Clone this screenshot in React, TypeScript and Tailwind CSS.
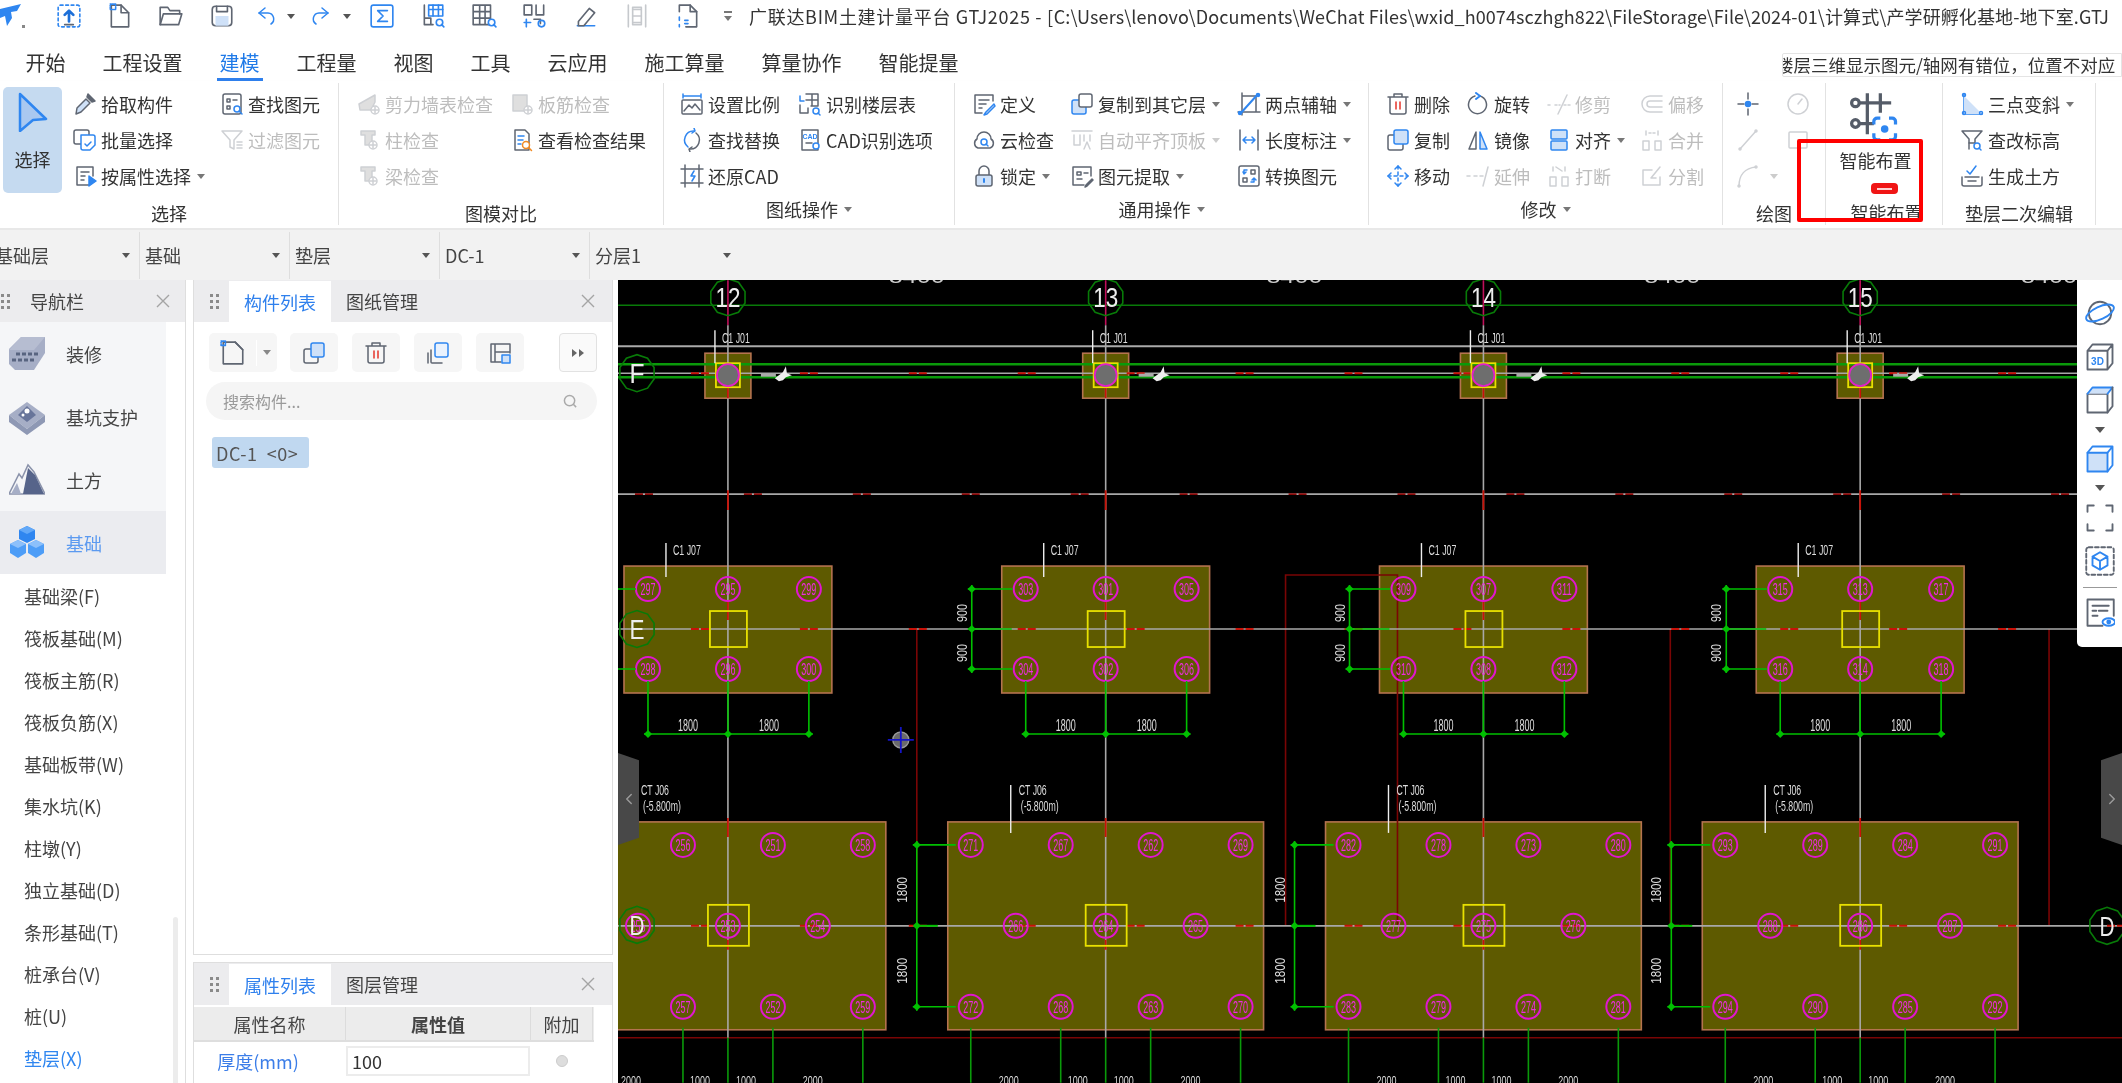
import { ReactNode } from 'react'
import { ChevronLeft, ChevronRight } from 'lucide-react'

const G = '#5f6672'
const B = '#2f86f0'
const L = '#cfe1f8'

const S = ({ children, c = 'w-[24px] h-[24px]' }: { children: ReactNode; c?: string }) => (
  <svg viewBox="0 0 24 24" className={c} fill="none" stroke={G} strokeWidth={1.5} strokeLinecap="round" strokeLinejoin="round">
    {children}
  </svg>
)

const icons: Record<string, ReactNode> = {
  pick: <S><path d="M15 2l7 7-3 1-5-5z" fill={G} /><path d="M13 7l4 4-9 9-5 2 1-6z" fill={L} /></S>,
  batch: <S><rect x="1" y="2" width="15" height="14" rx="2" /><path stroke={B} fill="#fff" d="M8 7h12a2 2 0 0 1 2 2v8l-5 5H10a2 2 0 0 1-2-2z" /><path stroke={B} d="M12 16l2 2 4-4" /></S>,
  attr: <S><path d="M20 12V3H4v18h12" /><path d="M8 8h8M8 12h4M8 16h3" /><path d="M16 12l7 5-7 5z" fill={B} stroke={B} /></S>,
  find: <S><rect x="3" y="2" width="18" height="20" rx="2" /><path d="M7 7h3v3H7zM13 8h4M7 14h3v3H7z" /><circle cx="17" cy="17" r="3" stroke={B} fill="#fff" /><path stroke={B} d="M19 19l3 3" /></S>,
  filter: <S><path d="M2 3h20l-8 9v9l-4-2v-7z" /><path d="M17 14h5M17 17h5M17 20h5" /></S>,
  wall: <S><path d="M2 12l16-9v7l-4 8H3z" fill="#999" /><circle cx="18" cy="18" r="4" fill="#fff" /><path d="M18 15v6M15 18h6" /></S>,
  rebar: <S><rect x="3" y="3" width="14" height="16" fill="#999" /><circle cx="18" cy="18" r="4" fill="#fff" /><path d="M18 15v6M15 18h6" /></S>,
  colChk: <S><path d="M4 3h14v4h-3v10H8V7H4z" fill="#999" /><circle cx="16" cy="17" r="4" fill="#fff" /><path d="M16 14v6M13 17h6" /></S>,
  result: <S><path d="M5 2h10l4 4v16H5z" /><path d="M8 8h6M8 12h5M8 16h3" stroke={B} /><circle cx="16" cy="17" r="3.5" stroke="#f08a24" fill="#fff" /><path stroke="#f08a24" d="M18.5 19.5l3 3" /></S>,
  scale: <S><path stroke={B} d="M3 2v4M21 2v4M3 4h18" /><rect x="2" y="8" width="20" height="14" rx="1" /><path d="M4 19l5-6 3 3 3-4 5 6" /></S>,
  floor: <S><path d="M8 2h12v12h-7M14 2v12M8 8h12" /><path stroke={B} d="M2 4v5h4" /><path d="M2 13v8h8v-5" /><circle cx="18" cy="19" r="3" stroke={B} /><path stroke={B} d="M20 21l2 2" /></S>,
  replace: <S><path d="M14 3a9 9 0 0 0-6 16" stroke={B} /><path d="M10 21a9 9 0 0 0 6-16" /><path stroke={B} d="M14 0l1 3-3 2" /><path d="M10 24l-1-3 3-2" /></S>,
  cad: <S><path d="M4 2h16v20H4z" /><text x="12" y="11" textAnchor="middle" fontSize="7" fontWeight="700" fill={B} stroke="none" fontFamily="Liberation Sans">CAD</text><path d="M8 15h6" /><circle cx="18" cy="18" r="3" stroke={B} fill="#fff" /></S>,
  restore: <S><path d="M5 1v22M19 1v22M1 5h22M1 19h22" /><path d="M14 7l-3 5h4l-3 5" stroke={B} /></S>,
  def: <S><path d="M21 9V3H3v18h7" /><path d="M7 8h10M7 12h7M7 16h3" /><path stroke={B} d="M22 12l-8 8-2 3 3-1 8-8z" fill={L} /></S>,
  cloud: <S><path d="M6 20a5 5 0 0 1-1-9 7 7 0 0 1 14 0 5 5 0 0 1-1 9z" /><circle cx="12" cy="14" r="3" stroke={B} /><path d="M14 16l2 2" stroke={B} /></S>,
  lock: <S><path d="M7 11V7a5 5 0 0 1 10 0v4" /><rect x="4" y="11" width="16" height="11" rx="2" fill={L} /><path stroke={B} d="M12 15v3" strokeWidth="2" /></S>,
  copyTo: <S><rect x="2" y="8" width="14" height="14" rx="2" stroke={B} fill={L} /><rect x="9" y="2" width="13" height="13" rx="2" fill="#fff" /></S>,
  autoAlign: <S><path d="M2 3h20M4 7v10h6V7M14 7v6M20 7v6M14 21l3-7 3 7" /></S>,
  extract: <S><path d="M21 12V3H3v18h11" /><path d="M7 8h4v3H7zM14 9h4M7 15h5" /><path d="M22 15l-6 6-1 2 2-1 6-6z" fill="#999" /></S>,
  twoPts: <S><path d="M5 1v22M1 20h22M5 4h14v16" /><path stroke={B} strokeWidth="2" d="M3 22L21 2" /><circle cx="3" cy="21" r="1.5" fill={B} stroke={B} /><circle cx="21" cy="3" r="1.5" fill={B} stroke={B} /></S>,
  length: <S><path d="M3 2v20M21 2v20" /><path stroke={B} d="M6 12h12M6 12l3-3M6 12l3 3M18 12l-3-3M18 12l-3 3" /></S>,
  convert: <S><rect x="2" y="2" width="20" height="20" rx="2" /><path d="M14 6h4v4h-4zM6 14h4v4H6z" /><path stroke={B} d="M10 6H7v4M6 8l1 2 2-2M14 18h3v-4M15 16l2-2 2 2" /></S>,
  del: <S><path d="M2 5h20M8 5V2h8v3M4 5v15a2 2 0 0 0 2 2h12a2 2 0 0 0 2-2V5" /><path stroke="#e5352b" d="M10 10v7M14 10v7" /></S>,
  copy: <S><rect x="2" y="7" width="15" height="15" rx="2" /><rect x="8" y="2" width="14" height="14" rx="2" stroke={B} fill={L} /></S>,
  move: <S><g stroke={B}><path d="M12 2v20M2 12h20" strokeDasharray="3 3" /><path d="M9 5l3-3 3 3M9 19l3 3 3-3M5 9l-3 3 3 3M19 9l3 3-3 3" /></g></S>,
  rot: <S><path d="M14 4a9 9 0 1 1-5 0" /><path stroke={B} d="M10 1l4 3-4 3" strokeWidth="2" /></S>,
  mirror: <S><path d="M10 4L3 21h7z" /><path stroke={B} d="M14 4l7 17h-7z" fill={L} /></S>,
  trim: <S><path d="M1 13h4M8 13h5M17 13h6" strokeDasharray="2 2" /><path d="M20 3L11 22" /></S>,
  extend: <S><path d="M1 12h4M8 12h3M14 12h3" strokeDasharray="3 2" /><path d="M22 3l-5 19" /></S>,
  align: <S><rect x="4" y="2" width="16" height="9" rx="1" stroke={B} fill={L} /><rect x="4" y="13" width="16" height="9" rx="1" stroke={B} fill={L} /></S>,
  merge: <S><path d="M3 13h6v9H3zM15 13h6v9h-6zM6 3v4M18 3v4" /><path d="M9 5h6" strokeDasharray="2 2" /></S>,
  breakI: <S><path d="M3 13h6v9H3zM15 13h6v9h-6zM6 3v4M18 3v4" /><path d="M9 3l6 4" /></S>,
  offset: <S><path d="M22 4H10a8 8 0 0 0 0 16h12" /><path d="M22 9H10a3 3 0 0 0 0 6h12" /></S>,
  split: <S><path d="M20 13v8H3V6h9" /><path d="M20 3l-9 11M11 14l5 0" /></S>,
  point: <S><path d="M12 1v6M12 17v6M2 12h6M16 12h6" /><circle cx="12" cy="12" r="2.5" fill={B} stroke={B} /></S>,
  clock: <S><circle cx="12" cy="12" r="10" /><path d="M12 12l4-5" /></S>,
  line: <S><path d="M4 21L20 3" /><circle cx="4" cy="21" r="1" /><circle cx="20" cy="3" r="1" /></S>,
  rect: <S><rect x="3" y="4" width="18" height="16" rx="1" /></S>,
  arc: <S><path d="M3 22C3 11 9 4 20 3" /><circle cx="3" cy="22" r="1" /><circle cx="20" cy="3" r="1" /></S>,
  tri: <S><path d="M4 2v20h18" stroke={B} /><path d="M4 4l18 18H4z" fill={L} stroke="none" /><circle cx="4" cy="3" r="1.5" stroke={B} /><circle cx="4" cy="21" r="1.5" stroke={B} /><circle cx="21" cy="21" r="1.5" stroke={B} /></S>,
  elev: <S><path d="M2 3h20l-7 8v4h-6v-4z" /><path d="M9 15v6" /><circle cx="17" cy="18" r="3" stroke={B} /><path stroke={B} d="M19 20l2 2" /></S>,
  soil: <S><path d="M2 13v7a2 2 0 0 0 2 2h16a2 2 0 0 0 2-2v-7M5 13h14M8 17h8" /><path stroke={B} d="M7 7l3 3 6-8" /></S>,
}

type Item = { t?: string; i?: string; off?: boolean; caret?: boolean } | null
type Col = { w: string; items: Item[] }
type Group = { w: string; pl: string; label: string; caret?: boolean; cols: Col[] }

const Caret = ({ off }: { off?: boolean }) => (
  <span className={`ml-[6px] h-0 w-0 border-x-[4px] border-t-[5px] border-x-transparent ${off ? 'border-t-[#ccc]' : 'border-t-[#777]'}`} />
)

const RibbonItem = ({ item }: { item: Item }) => {
  if (!item) return <div className="h-[36px]" />
  return (
    <div className="flex h-[36px] items-center whitespace-nowrap">
      <span className={`mr-[4px] ${item.off ? 'opacity-30' : ''}`}>{item.i && icons[item.i]}</span>
      {item.t && <span className={item.off ? 'text-[#bdbdbd]' : 'text-[#333]'}>{item.t}</span>}
      {item.caret && <Caret off={item.off} />}
    </div>
  )
}

const rightGroups: Group[] = [
  {
    w: 'w-[325px]', pl: 'pl-[18px]', label: '图模对比',
    cols: [
      { w: 'w-[153px]', items: [{ t: '剪力墙表检查', i: 'wall', off: true }, { t: '柱检查', i: 'colChk', off: true }, { t: '梁检查', i: 'colChk', off: true }] },
      { w: 'w-[150px]', items: [{ t: '板筋检查', i: 'rebar', off: true }, { t: '查看检查结果', i: 'result' }] },
    ],
  },
  {
    w: 'w-[291px]', pl: 'pl-[16px]', label: '图纸操作', caret: true,
    cols: [
      { w: 'w-[118px]', items: [{ t: '设置比例', i: 'scale' }, { t: '查找替换', i: 'replace' }, { t: '还原CAD', i: 'restore' }] },
      { w: 'w-[150px]', items: [{ t: '识别楼层表', i: 'floor' }, { t: 'CAD识别选项', i: 'cad' }] },
    ],
  },
  {
    w: 'w-[414px]', pl: 'pl-[17px]', label: '通用操作', caret: true,
    cols: [
      { w: 'w-[98px]', items: [{ t: '定义', i: 'def' }, { t: '云检查', i: 'cloud' }, { t: '锁定', i: 'lock', caret: true }] },
      { w: 'w-[167px]', items: [{ t: '复制到其它层', i: 'copyTo', caret: true }, { t: '自动平齐顶板', i: 'autoAlign', off: true, caret: true }, { t: '图元提取', i: 'extract', caret: true }] },
      { w: 'w-[125px]', items: [{ t: '两点辅轴', i: 'twoPts', caret: true }, { t: '长度标注', i: 'length', caret: true }, { t: '转换图元', i: 'convert' }] },
    ],
  },
  {
    w: 'w-[354px]', pl: 'pl-[17px]', label: '修改', caret: true,
    cols: [
      { w: 'w-[80px]', items: [{ t: '删除', i: 'del' }, { t: '复制', i: 'copy' }, { t: '移动', i: 'move' }] },
      { w: 'w-[81px]', items: [{ t: '旋转', i: 'rot' }, { t: '镜像', i: 'mirror' }, { t: '延伸', i: 'extend', off: true }] },
      { w: 'w-[93px]', items: [{ t: '修剪', i: 'trim', off: true }, { t: '对齐', i: 'align', caret: true }, { t: '打断', i: 'breakI', off: true }] },
      { w: 'w-[70px]', items: [{ t: '偏移', i: 'offset', off: true }, { t: '合并', i: 'merge', off: true }, { t: '分割', i: 'split', off: true }] },
    ],
  },
  {
    w: 'w-[103px]', pl: 'pl-[13px]', label: '绘图',
    cols: [
      { w: 'w-[50px]', items: [{ i: 'point' }, { i: 'line', off: true }, { i: 'arc', off: true, caret: true }] },
      { w: 'w-[35px]', items: [{ i: 'clock', off: true }, { i: 'rect', off: true }] },
    ],
  },
]

const GroupBox = ({ g }: { g: Group }) => (
  <div className={`flex h-[142px] flex-col border-r border-[#e2e2e2] ${g.w}`}>
    <div className={`flex h-[112px] pt-[3px] ${g.pl}`}>
      {g.cols.map((c, idx) => (
        <div key={idx} className={c.w}>
          {c.items.map((it, k) => <RibbonItem key={k} item={it} />)}
        </div>
      ))}
    </div>
    <div className={`flex flex-1 items-center justify-center text-[#333] ${g.caret ? 'pb-[2px]' : 'pt-[6px]'}`}>
      {g.label}
      {g.caret && <Caret />}
    </div>
  </div>
)

const Ribbon = () => (
  <div className="flex h-[149px] pt-[2px] text-[18px] leading-none border-b-2 border-[#e8e8e8] shadow-[0_1px_2px_rgba(0,0,0,0.08)]">
    <div className="flex h-[142px] w-[339px] flex-col border-r border-[#e2e2e2]">
      <div className="flex h-[112px] pt-[3px]">
        <div className="ml-[3px] mt-[1px] flex h-[106px] w-[59px] flex-col items-center rounded-[5px] bg-[#c5daf0] pt-[5px] text-[#333]">
          <svg viewBox="0 0 30 40" className="h-[40px] w-[30px]" fill="#a9c8f0" stroke={B} strokeWidth="2.5" strokeLinejoin="round">
            <path d="M2 2l26 25-13 1-13 11z" />
          </svg>
          <span className="mt-[18px]">选择</span>
        </div>
        <div className="ml-[11px] w-[147px]">
          <RibbonItem item={{ t: '拾取构件', i: 'pick' }} />
          <RibbonItem item={{ t: '批量选择', i: 'batch' }} />
          <RibbonItem item={{ t: '按属性选择', i: 'attr', caret: true }} />
        </div>
        <div>
          <RibbonItem item={{ t: '查找图元', i: 'find' }} />
          <RibbonItem item={{ t: '过滤图元', i: 'filter', off: true }} />
        </div>
      </div>
      <div className="flex flex-1 items-center justify-center pt-[6px] text-[#333]">选择</div>
    </div>
    {rightGroups.map((g) => <GroupBox key={g.label} g={g} />)}
    <div className="flex h-[142px] w-[117px] flex-col border-r border-[#e2e2e2] text-[#333]">
      <div className="flex h-[112px] flex-col items-center pt-[8px]">
        <svg viewBox="0 0 48 48" className="ml-[-17px] h-[52px] w-[52px]" fill="none" stroke="#555c68" strokeWidth="3">
          <path d="M4 11h34M4 30h18M16 2v38M28 2v18" />
          <circle cx="5" cy="11" r="3.5" fill="#fff" />
          <circle cx="5" cy="30" r="3.5" fill="#fff" />
          <path stroke={B} d="M28 25h-3a3 3 0 0 0-3 3v3M36 25h3a3 3 0 0 1 3 3v3M28 45h-3a3 3 0 0 1-3-3v-3M36 45h3a3 3 0 0 0 3-3v-3" />
          <circle cx="32" cy="35" r="2" fill={B} stroke={B} />
        </svg>
        <span className="ml-[-17px] mt-[8px]">智能布置</span>
      </div>
      <div className="flex flex-1 items-center justify-center pl-[5px] pt-[3px]">智能布置</div>
    </div>
    <div className="flex h-[142px] w-[153px] flex-col border-r border-[#e2e2e2]">
      <div className="h-[112px] pl-[17px] pt-[3px]">
        <RibbonItem item={{ t: '三点变斜', i: 'tri', caret: true }} />
        <RibbonItem item={{ t: '查改标高', i: 'elev' }} />
        <RibbonItem item={{ t: '生成土方', i: 'soil' }} />
      </div>
      <div className="flex flex-1 items-center justify-center pt-[6px] text-[#333]">垫层二次编辑</div>
    </div>
  </div>
)

const TI = ({ children }: { children: ReactNode }) => (
  <div className="flex w-[51px] justify-center"><S c="h-[26px] w-[26px]">{children}</S></div>
)

const Tri = () => <span className="h-0 w-0 border-x-[4px] border-t-[5px] border-x-transparent border-t-[#555]" />

const TitleBar = () => (
  <div className="flex h-[32px] items-center overflow-hidden whitespace-nowrap text-[18px] text-[#333] *:shrink-0">
    <div className="flex w-[43px] items-center">
      <svg viewBox="0 0 26 28" className="h-[28px] w-[26px]" fill={B}>
        <path d="M0 7l21-5-4 7-6 1 1 6-5 8-2-10-5 2z" />
        <path d="M22 23h3v3h-3z" fill="#888" />
      </svg>
    </div>
    <TI><rect x="2" y="2" width="20" height="20" stroke={B} strokeDasharray="2.5 2.5" rx="2" /><path stroke="#1d6fd8" strokeWidth="2.5" d="M12 17V8M8 11l4-4 4 4" /><path d="M8 20h8" /></TI>
    <TI><path d="M13 2H4v20h16V9z" /><path d="M13 2v7h7" /><rect x="3" y="1" width="5" height="5" stroke={B} strokeDasharray="1 1" /></TI>
    <TI><path d="M2 20V4h7l2 3h9v3" /><path d="M2 20l3-10h17l-3 10z" /></TI>
    <TI><rect x="3" y="3" width="18" height="18" rx="3" /><path d="M7 3v5h10V3" /><rect x="6" y="12" width="12" height="9" fill={L} stroke="none" /></TI>
    <div className="flex w-[40px] justify-center"><S><path stroke={B} d="M10 4L4 9l6 5" /><path stroke={B} d="M4 9h9a6 6 0 0 1 3 11" /></S></div>
    <Tri />
    <div className="ml-[2px] flex w-[46px] justify-center"><S><path stroke={B} d="M14 4l6 5-6 5" /><path stroke={B} d="M20 9h-9a6 6 0 0 0-3 11" /></S></div>
    <Tri />
    <div className="ml-[6px] flex w-[50px] justify-center"><S c="h-[26px] w-[26px]"><rect x="2" y="2" width="20" height="20" rx="2" stroke={B} /><path stroke={B} d="M17 7H8l5 5-5 5h9" /></S></div>
    <TI><path d="M4 2v18h8M4 20v-6h6v6" /><rect x="8" y="2" width="13" height="10" stroke={B} /><path stroke={B} d="M8 6h13M12 2v10M17 2v10" /><circle cx="18" cy="18" r="3" stroke={B} /><path stroke={B} d="M20 20l2 2" /></TI>
    <TI><path d="M2 2h16v18H2zM8 2v18M13 2v18M2 8h16M2 14h16" /><circle cx="19" cy="18" r="3" stroke={B} fill="#fff" /><path stroke={B} d="M21 20l2 2" /></TI>
    <TI><path d="M2 2v9h7V2zM13 2v9h7V2" /><path stroke={B} d="M4 15v7M2 18h6" /><path d="M11 15h6v4" /><circle cx="18" cy="19" r="3" stroke={B} /></TI>
    <TI><path d="M4 21h16" stroke={B} /><path d="M5 17l10-12 5 4-10 12H5z" /></TI>
    <TI><g opacity=".35"><path d="M4 2v20M20 2v20M8 6h8M8 12h8M8 18h8" /><rect x="8" y="4" width="8" height="16" /></g></TI>
    <TI><path d="M4 8V2h10l6 6v14H10" /><path d="M14 2v6h6" /><path d="M4 13v3M4 20v2M9 16h3M9 19h3" stroke={B} /></TI>
    <div className="flex w-[30px] flex-col items-center gap-[3px]">
      <span className="h-[2px] w-[8px] bg-[#777]" />
      <span className="h-0 w-0 border-x-[4px] border-t-[5px] border-x-transparent border-t-[#777]" />
    </div>
    <span className="ml-[6px] text-[18px]">
      <span className="tracking-[0.7px]">广联达BIM土建计量平台 GTJ2025 - [</span>
      <span className="tracking-[0.1px]">C:\Users\lenovo\Documents\WeChat Files\wxid_h0074sczhgh822\FileStorage\File\2024-01\计算式\产学研孵化基地-地下室.GTJ</span>
    </span>
  </div>
)

const tabs = ['开始', '工程设置', '建模', '工程量', '视图', '工具', '云应用', '施工算量', '算量协作', '智能提量']

const TabBar = () => (
  <div className="flex h-[49px] items-end overflow-hidden pl-[7px] text-[20px] leading-none text-[#333]">
    {tabs.map((t) => (
      <div key={t} className="flex h-[36px] items-center px-[18.5px]">
        {t === '建模' ? (
          <span className="mx-[-3px] flex h-[36px] items-center border-b-[3px] border-[#2f80ed] px-[3px] pt-[3px] text-[#1f7ae8]">{t}</span>
        ) : t}
      </div>
    ))}
    <div className="mb-[4px] ml-auto h-[24px] w-[340px] overflow-hidden whitespace-nowrap rounded-l-[2px] border border-[#e4e4e4] bg-white text-[17.5px] leading-[22px]">
      <span className="ml-[-7px]">楼层三维显示图元/轴网有错位，位置不对应</span>
    </div>
  </div>
)

const Selectors = () => (
  <div className="flex h-[50px] shrink-0 items-center overflow-hidden bg-[#f2f2f2] text-[18px] text-[#444]">
    {['基础层', '基础', '垫层', 'DC-1', '分层1'].map((t, i) => (
      <div key={t} className={`flex h-[47px] shrink-0 items-center justify-between pl-[5px] pr-[9px] ${i === 0 ? 'ml-[-10px]' : ''} ${i === 4 ? 'w-[150px]' : 'w-[150px] border-r border-[#dedede]'}`}>
        <span>{t}</span>
        <span className="h-0 w-0 border-x-[4px] border-t-[5px] border-x-transparent border-t-[#555]" />
      </div>
    ))}
  </div>
)

const Grip = () => (
  <div className="grid grid-cols-2 gap-x-[3px] gap-y-[3px]">
    {[0, 1, 2, 3, 4, 5].map((i) => <span key={i} className="h-[3px] w-[3px] bg-[#8a8a8a]" />)}
  </div>
)

const CloseX = () => (
  <svg viewBox="0 0 14 14" className="h-[14px] w-[14px]" stroke="#a4a4a4" strokeWidth="1.4"><path d="M1 1l12 12M13 1L1 13" /></svg>
)

const navIcons: Record<string, ReactNode> = {
  装修: (
    <svg viewBox="0 0 36 36" className="h-[36px] w-[36px]">
      <path d="M0 28V13L12 1h24v16L25 34H6z" fill="#a6aec6" />
      <path d="M12 1h24L25 14H0z" fill="#c1c7d8" opacity=".6" />
      <path d="M3 24h4M9 24h4M15 24h4M21 24h4M7 18h4M13 18h4M19 18h4M25 18h4" stroke="#586480" strokeWidth="3" />
    </svg>
  ),
  基坑支护: (
    <svg viewBox="0 0 36 36" className="h-[36px] w-[36px]">
      <path d="M18 3l18 13-18 14L0 16z" fill="#a6aec6" />
      <path d="M0 16v7l18 13 18-13v-7L18 30z" fill="#8e98b4" />
      <path d="M18 7l9 9-9 7-9-7z" fill="#68759a" />
      <circle cx="18" cy="12" r="2.5" fill="#fff" />
      <circle cx="14" cy="16" r="1.5" fill="#fff" />
    </svg>
  ),
  土方: (
    <svg viewBox="0 0 36 36" className="h-[36px] w-[36px]">
      <path d="M0 32L10 12l3 4 6-13 6 7 11 22z" fill="none" stroke="#8b93ab" strokeWidth="1.5" />
      <path d="M19 6l7 7 9 19H14z" fill="#56648a" />
      <path d="M2 32l6-11 4 11z" fill="#a6aec6" />
    </svg>
  ),
  基础: (
    <svg viewBox="0 0 36 36" className="h-[36px] w-[36px]">
      <path d="M18 1l8 4v9l-8 4-8-4V5z" fill="#2f86f0" />
      <path d="M18 1l8 4-8 4-8-4z" fill="#62a8f8" />
      <path d="M9 15l8 4v9l-8 5-8-5v-9z" fill="#4d9df7" />
      <path d="M9 15l8 4-8 4-8-4z" fill="#8cc0fb" />
      <path d="M27 15l8 4v9l-8 5-8-5v-9z" fill="#4d9df7" />
      <path d="M27 15l8 4-8 4-8-4z" fill="#8cc0fb" />
    </svg>
  ),
}

const subs = ['基础梁(F)', '筏板基础(M)', '筏板主筋(R)', '筏板负筋(X)', '基础板带(W)', '集水坑(K)', '柱墩(Y)', '独立基础(D)', '条形基础(T)', '桩承台(V)', '桩(U)', '垫层(X)']

const NavPanel = () => (
  <div className="relative flex h-full w-[186px] shrink-0 flex-col overflow-hidden border-r border-[#dedede] text-[18px] leading-none text-[#444]">
    <div className="flex h-[42px] shrink-0 items-center bg-[#ececee] pr-[15px]">
      <div className="ml-[1px]"><Grip /></div>
      <span className="ml-[20px] flex-1">导航栏</span>
      <CloseX />
    </div>
    <div className="w-[166px] bg-[#f5f6f8]">
      {Object.keys(navIcons).map((k) => (
        <div key={k} className={`flex h-[63px] items-center pl-[9px] ${k === '基础' ? 'bg-[#ebecf0] text-[#5c9af0]' : ''}`}>
          {navIcons[k]}
          <span className="ml-[21px]">{k}</span>
        </div>
      ))}
    </div>
    <div className="pt-[1px]">
      {subs.map((s) => (
        <div key={s} className={`flex h-[42px] items-center pl-[24px] ${s === '垫层(X)' ? 'text-[#2f86f0]' : ''}`}>{s}</div>
      ))}
    </div>
    <div className="absolute left-[173px] top-[637px] h-[170px] w-[5px] rounded-[3px] bg-[#ececec]" />
  </div>
)

const ToolBtn = ({ children, w = 'w-[48px]' }: { children: ReactNode; w?: string }) => (
  <div className={`flex h-[39px] items-center justify-center rounded-[5px] bg-[#f6f6f6] ${w}`}>{children}</div>
)

const PanelHead = ({ a, b }: { a: string; b: string }) => (
  <div className="flex h-[42px] shrink-0 items-end bg-[#ececee]">
    <div className="flex h-[42px] w-[35px] items-center justify-center pl-[6px]"><Grip /></div>
    <div className="flex h-[41px] w-[102px] items-center justify-center bg-white text-[#2f80ed]">{a}</div>
    <div className="flex h-[42px] flex-1 items-center pl-[15px] text-[#444]">{b}</div>
    <div className="flex h-[42px] items-center pr-[17px]"><CloseX /></div>
  </div>
)

const MiddlePanels = () => (
  <div className="ml-[7px] flex h-full w-[420px] shrink-0 flex-col text-[18px] leading-none">
    <div className="flex h-[675px] flex-col border border-t-0 border-[#dedede]">
      <PanelHead a="构件列表" b="图纸管理" />
      <div className="mt-[11px] flex items-center pl-[15px]">
        <ToolBtn w="w-[68px]">
          <div className="flex w-[48px] justify-center border-r border-white"><S c="h-[26px] w-[26px]"><path d="M14 2H3v20h18V9z" /><path d="M14 2l7 7" /><rect x="1" y="1" width="4" height="4" stroke={B} strokeDasharray="1 1" /></S></div>
          <div className="flex w-[20px] justify-center"><span className="h-0 w-0 border-x-[4px] border-t-[5px] border-x-transparent border-t-[#888]" /></div>
        </ToolBtn>
        <div className="ml-[13px] flex gap-[14px]">
          <ToolBtn><S><rect x="2" y="8" width="14" height="14" rx="2" /><rect x="9" y="2" width="13" height="14" rx="2" stroke={B} fill={L} /></S></ToolBtn>
          <ToolBtn><S><path d="M2 5h20M8 5V2h8v3M4 5v15a2 2 0 0 0 2 2h12a2 2 0 0 0 2-2V5" /><path stroke="#e5352b" d="M10 10v7M14 10v7" /></S></ToolBtn>
          <ToolBtn><S><path d="M5 9v12a1 1 0 0 0 1 1h10M2 12v10" /><rect x="9" y="2" width="13" height="14" rx="2" stroke={B} fill="#eaf2fd" /></S></ToolBtn>
          <ToolBtn><S><path d="M22 12V3H3v18h10M7 3v18M7 11h15" /><rect x="14" y="14" width="8" height="8" fill={L} stroke={B} /></S></ToolBtn>
        </div>
        <div className="ml-[35px] flex h-[39px] w-[38px] items-center justify-center gap-[2px] rounded-[4px] border border-[#e2e2e2] bg-[#fafafa]">
          <span className="h-0 w-0 border-y-[4px] border-l-[5px] border-y-transparent border-l-[#666]" />
          <span className="h-0 w-0 border-y-[4px] border-l-[5px] border-y-transparent border-l-[#666]" />
        </div>
      </div>
      <div className="ml-[12px] mt-[10px] flex h-[38px] w-[391px] items-center justify-between rounded-full bg-[#f5f5f5] pl-[17px] pr-[19px] text-[16px] text-[#9a9a9a]">
        <span>搜索构件...</span>
        <svg viewBox="0 0 16 16" className="h-[15px] w-[15px]" fill="none" stroke="#aaa" strokeWidth="1.6"><circle cx="7" cy="7" r="5.5" /><path d="M11 11l3 3" /></svg>
      </div>
      <div className="ml-[18px] mt-[17px] flex h-[31px] w-[97px] items-center whitespace-pre rounded-[3px] bg-[#c0d8f0] pl-[4px] tracking-[0.5px] text-[#555]">DC-1  &lt;0&gt;</div>
    </div>
    <div className="mt-[7px] flex flex-1 flex-col overflow-hidden border border-b-0 border-[#dedede]">
      <PanelHead a="属性列表" b="图层管理" />
      <div className="mt-[2px] flex h-[35px] w-[400px] shrink-0 border-b-2 border-[#dedede] bg-[#ececec] text-[#444]">
        <div className="flex w-[152px] items-center justify-center border-r border-[#dcdcdc]">属性名称</div>
        <div className="flex w-[185px] items-center justify-center border-r border-[#dcdcdc] font-bold">属性值</div>
        <div className="flex w-[62px] items-center justify-center border-r border-[#dcdcdc]">附加</div>
      </div>
      <div className="flex h-[38px] w-[400px] shrink-0 items-center">
        <div className="flex w-[152px] items-center justify-center pr-[24px] text-[#3b7de8]">厚度(mm)</div>
        <div className="flex h-[30px] w-[184px] items-center border-2 border-[#ececec] pl-[4px] text-[#333]">100</div>
        <div className="flex w-[63px] justify-center"><span className="h-[12px] w-[12px] rounded-full border border-[#ccc] bg-[#ddd]" /></div>
      </div>
    </div>
  </div>
)

const range = (start: number, end: number, step: number) => {
  const out: number[] = []
  for (let v = start; v < end; v += step) out.push(v)
  return out
}

const COL = [727, 1105, 1483, 1860]
const RED = '#c81208'
const DKRED = '#7a0505'
const GRN = '#00c000'

const Num = ({ x, y, t, size = 14, len, fill = '#ddd', rot }: { x: number; y: number; t: string; size?: number; len?: number; fill?: string; rot?: boolean }) => (
  <text
    x={x}
    y={y}
    fontSize={size}
    fill={fill}
    textAnchor="middle"
    fontFamily="Liberation Sans, sans-serif"
    textLength={len}
    lengthAdjust="spacingAndGlyphs"
    transform={rot ? `rotate(-90 ${x} ${y})` : undefined}
  >
    {t}
  </text>
)

const Pile = ({ x, y, n }: { x: number; y: number; n: string | number }) => (
  <g>
    <circle cx={x} cy={y} r={12} fill="none" stroke="#e016cf" strokeWidth={2} />
    <Num x={x} y={y + 6} t={String(n)} size={16} len={15} fill="#f02ce0" />
  </g>
)

const Axis = ({ x, y, t }: { x: number; y: number; t: string }) => {
  const pts = range(0, 10, 1).map((i) => {
    const a = (i * Math.PI) / 5 + Math.PI / 10
    return `${x + 18 * Math.cos(a)},${y + 18.5 * Math.sin(a)}`
  }).join(' ')
  return (
    <g>
      <polygon points={pts} fill="none" stroke="#087a08" strokeWidth={1.6} />
      <Num x={x} y={y + 10} t={t} size={28} fill="#eee" len={t.length > 1 ? 25 : 15} />
    </g>
  )
}

const Label = ({ x, y, t, sub }: { x: number; y: number; t: string; sub?: boolean }) => (
  <g>
    <Num x={x + 17} y={y} t={t} size={15} len={28} />
    {sub && <Num x={x + 24} y={y + 16} t="(-5.800m)" size={14} len={38} />}
  </g>
)

const eTop = [
  [297, 295, 299],
  [303, 301, 305],
  [309, 307, 311],
  [315, 313, 317],
]
const eBot = [
  [298, 296, 300],
  [304, 302, 306],
  [310, 308, 312],
  [316, 314, 318],
]
const dTop = [
  [0, 256, 251, 258],
  [271, 267, 262, 269],
  [282, 278, 273, 280],
  [293, 289, 284, 291],
]
const dMid = [
  [255, 253, 254],
  [266, 264, 265],
  [277, 275, 276],
  [288, 286, 287],
]
const dBot = [
  [0, 257, 252, 259],
  [272, 268, 263, 270],
  [283, 279, 274, 281],
  [294, 290, 285, 292],
]

const Tick = ({ x, y }: { x: number; y: number }) => (
  <path d={`M${x - 4} ${y}L${x} ${y - 4}L${x + 4} ${y}L${x} ${y + 4}Z`} fill={GRN} />
)

const CadDrawing = () => (
  <svg viewBox="617 280 1505 803" className="h-full w-full">
    {/* caps */}
    {COL.map((cx) => (
      <g key={cx} fill="#5e5a00" stroke="#b5734f" strokeWidth={1.6}>
        <rect x={cx - 23} y={353} width={46} height={45} />
        <rect x={cx - 104} y={566} width={208} height={127} />
        <rect x={cx - 158} y={822} width={316} height={208} />
      </g>
    ))}

    {/* dark red walls */}
    <g stroke={DKRED} strokeWidth={1.6} fill="none">
      <path d="M916 629V926M1670 629V926M2049 629V926M1285 926V575H1397V926" />
      <path d="M617 1038H2122" />
    </g>

    {/* plan lines */}
    <path d="M617 305H2122" stroke="#087a08" strokeWidth={1.6} />
    <path d="M617 364H2122M617 377H2122" stroke="#0a9a0a" strokeWidth={2.4} />
    <path d="M617 346H2122" stroke="#aaa" strokeWidth={2} />
    <path d="M617 373H2122M617 494H2122M617 629H2122M617 926H2122" stroke="#a8a8a8" strokeWidth={1.6} />
    {COL.map((cx) => (
      <g key={cx}>
        <path d={`M${cx} 280V325`} stroke="#c0105a" strokeWidth={1.6} />
        <path d={`M${cx} 325V1038`} stroke="#a8a8a8" strokeWidth={1.6} />
        <path d={`M${cx} 490V510M${cx} 601V620M${cx} 818V837M${cx} 940V950M${cx} 387V398`} stroke={RED} strokeWidth={1.8} />
        <path d={`M${cx} 1038V1083`} stroke="#0a9a0a" strokeWidth={1.6} />
      </g>
    ))}

    {/* red centre dashes */}
    {[373, 629, 926].map((y) =>
      range(690, 2122, 109).map((x) => (
        <path key={`${y}-${x}`} d={`M${x} ${y}h8M${x + 10} ${y}h8`} stroke={RED} strokeWidth={2} />
      )),
    )}
    {range(634, 2080, 109).map((x) => (
      <path key={x} d={`M${x} 494h8M${x + 10} 494h8`} stroke="#8a0808" strokeWidth={2} />
    ))}

    {/* F row */}
    {COL.map((cx) => (
      <g key={cx}>
        <rect x={cx - 12} y={363} width={24} height={24} fill="none" stroke="#e8e000" strokeWidth={1.8} />
        <circle cx={cx} cy={375} r={11} fill="#6e6e6e" stroke="#e020c8" strokeWidth={1.8} />
        <path d={`M${cx - 13} 330V363`} stroke="#eee" strokeWidth={1.4} />
        <Label x={cx - 9} y={343} t="C1 J01" />
        <path d={`M${cx + 33} 375H${cx + 48}`} stroke="#aaa" strokeWidth={3} />
        <path d={`M${cx + 47} 378l8-6 3-6 1 7 5 2-6 2-3 3-4 1z`} fill="#eee" />
      </g>
    ))}

    {/* E row */}
    {COL.map((cx, i) => (
      <g key={cx}>
        <rect x={cx - 18} y={611} width={37} height={36} fill="none" stroke="#e8e000" strokeWidth={1.8} />
        <path d={`M${cx - 62} 543V577`} stroke="#eee" strokeWidth={1.4} />
        <Label x={cx - 58} y={555} t="C1 J07" />
        {[-80, 0, 81].map((dx, k) => <Pile key={k} x={cx + dx} y={589} n={eTop[i][k]} />)}
        {[-80, 0, 81].map((dx, k) => <Pile key={k} x={cx + dx} y={669} n={eBot[i][k]} />)}
        <path d={`M${cx - 80} 681V734M${cx} 681V734M${cx + 81} 681V734M${cx - 84} 734H${cx + 85}`} stroke={GRN} strokeWidth={1.6} />
        <Tick x={cx - 80} y={734} />
        <Tick x={cx} y={734} />
        <Tick x={cx + 81} y={734} />
        <Num x={cx - 40} y={731} t="1800" size={17} len={20} />
        <Num x={cx + 41} y={731} t="1800" size={17} len={20} />
        {i > 0 && (
          <g>
            <path d={`M${cx - 134} 585V673M${cx - 138} 589H${cx - 93}M${cx - 138} 629H${cx - 94}M${cx - 138} 669H${cx - 93}`} stroke={GRN} strokeWidth={1.6} />
            <Tick x={cx - 134} y={589} />
            <Tick x={cx - 134} y={629} />
            <Tick x={cx - 134} y={669} />
            <Num x={cx - 139} y={613} t="900" size={15} len={18} rot />
            <Num x={cx - 139} y={653} t="900" size={15} len={18} rot />
          </g>
        )}
      </g>
    ))}
    <path d="M617 589H635M617 669H635" stroke={GRN} strokeWidth={1.6} />

    {/* D row */}
    {COL.map((cx, i) => (
      <g key={cx}>
        <rect x={cx - 20} y={905} width={41} height={41} fill="none" stroke="#e8e000" strokeWidth={1.8} />
        <path d={`M${cx - 95} 785V833`} stroke="#eee" strokeWidth={1.4} />
        <Label x={cx - 90} y={795} t="CT J06" sub />
        {[-135, -45, 45, 135].map((dx, k) => (
          <g key={k}>
            <Pile x={cx + dx} y={845} n={dTop[i][k]} />
            <Pile x={cx + dx} y={1007} n={dBot[i][k]} />
            <path d={`M${cx + dx} 1028V1083`} stroke="#0a9a0a" strokeWidth={1.6} />
          </g>
        ))}
        {[-90, 0, 90].map((dx, k) => <Pile key={k} x={cx + dx} y={926} n={dMid[i][k]} />)}
        {[
          [-97, '2000'],
          [-28, '1000'],
          [18, '1000'],
          [85, '2000'],
        ].map(([dx, t]) => (
          <Num key={dx as number} x={cx + (dx as number)} y={1085} t={t as string} size={13} len={20} />
        ))}
        {i > 0 && (
          <g>
            <path d={`M${cx - 189} 841V1011M${cx - 193} 845H${cx - 150}M${cx - 193} 1007H${cx - 150}`} stroke={GRN} strokeWidth={1.6} />
            <path d={`M${cx - 189} 926H${cx - 168}`} stroke={GRN} strokeWidth={2} />
            <Tick x={cx - 189} y={845} />
            <Tick x={cx - 189} y={926} />
            <Tick x={cx - 189} y={1007} />
            <Num x={cx - 199} y={890} t="1800" size={14} len={26} rot />
            <Num x={cx - 199} y={971} t="1800" size={14} len={26} rot />
          </g>
        )}
      </g>
    ))}

    {/* grid bubbles */}
    {COL.map((cx, i) => <Axis key={cx} x={cx} y={297} t={String(12 + i)} />)}
    <Axis x={636} y={373} t="F" />
    <Axis x={636} y={629} t="E" />
    <Axis x={636} y={925} t="D" />
    <Axis x={2107} y={926} t="D" />

    {/* partial dimension text cut by the top edge */}
    {COL.map((cx) => <Num key={cx} x={cx + 189} y={283} t="8400" size={20} fill="#ccc" len={56} />)}

    {/* origin marker */}
    <circle cx={900} cy={740} r={8} fill="#6a6a6a" stroke="#9a9a9a" strokeWidth={1.4} />
    <path d="M900 727V753M887 740H913" stroke="#1414c8" strokeWidth={1.8} />
  </svg>
)

const ViewTools = () => (
  <div className="absolute right-0 top-0 flex h-[367px] w-[45px] flex-col items-center rounded-bl-[5px] bg-white pt-[18px]">
    <S c="h-[30px] w-[30px]"><circle cx="12" cy="12" r="9" /><ellipse cx="12" cy="12" rx="12" ry="5" transform="rotate(-25 12 12)" stroke={B} /></S>
    <div className="mt-[14px]"><S c="h-[30px] w-[30px]"><path d="M2 7h16v15H2zM2 7l4-5h16v15l-4 5M18 7l4-5" /><text x="10" y="18" textAnchor="middle" fontSize="8" fontWeight="700" fill={B} stroke="none" fontFamily="Liberation Sans">3D</text></S></div>
    <div className="mt-[13px]"><S c="h-[30px] w-[30px]"><path d="M2 7h16v15H2z" /><path stroke={B} d="M2 7l4-5h16l-4 5" fill={L} /><path d="M18 22l4-5V2" /></S></div>
    <span className="mt-[12px] h-0 w-0 border-x-[5px] border-t-[6px] border-x-transparent border-t-[#555]" />
    <div className="mt-[11px]"><S c="h-[30px] w-[30px]"><g stroke={B}><path d="M2 7h16v15H2z" fill={L} /><path d="M2 7l4-5h16l-4 5M18 22l4-5V2" /></g></S></div>
    <span className="mt-[11px] h-0 w-0 border-x-[5px] border-t-[6px] border-x-transparent border-t-[#555]" />
    <div className="mt-[12px]"><S c="h-[30px] w-[30px]"><path d="M2 7V2h5M17 2h5v5M2 17v5h5M17 22h5v-5" /></S></div>
    <div className="mt-[13px]"><S c="h-[30px] w-[30px]"><rect x="1" y="1" width="22" height="22" rx="2" strokeDasharray="3 2" /><path stroke={B} d="M12 5l6 3.5v7L12 19l-6-3.5v-7zM6 8.5l6 3.5 6-3.5M12 12v7" /></S></div>
    <div className="mt-[11px] h-[1px] w-[34px] bg-[#999]" />
    <div className="mt-[9px]"><S c="h-[30px] w-[30px]"><path d="M23 15V2H2v21h12" /><path d="M6 7h13M6 11h3M11 11h7M6 15h4" /><ellipse cx="19" cy="20" rx="5" ry="3" stroke={B} /><circle cx="19" cy="20" r="1.2" fill={B} stroke={B} /></S></div>
  </div>
)

export default function App() {
  return (
    <div className="relative flex h-screen w-screen flex-col overflow-hidden bg-white font-['Noto_Sans_CJK_SC','Noto_Sans',sans-serif] blur-[0.35px]">
      <TitleBar />
      <TabBar />
      <Ribbon />
      <Selectors />
      <div className="flex min-h-0 flex-1">
        <NavPanel />
        <MiddlePanels />
        <div className="relative ml-[5px] min-w-0 flex-1 overflow-hidden bg-black">
          <CadDrawing />
          <ViewTools />
          <div className="absolute left-0 top-[473px] flex h-[92px] w-[21px] items-center justify-center bg-[#484848] [clip-path:polygon(0_0,100%_8%,100%_92%,0_100%)]">
            <ChevronLeft className="h-[18px] w-[18px] text-[#999]" />
          </div>
          <div className="absolute right-0 top-[473px] flex h-[92px] w-[21px] items-center justify-center bg-[#484848] [clip-path:polygon(0_8%,100%_0,100%_100%,0_92%)]">
            <ChevronRight className="h-[18px] w-[18px] text-[#999]" />
          </div>
        </div>
      </div>
      {/* red annotation from the screenshot */}
      <div className="absolute left-[1797px] top-[139px] h-[83px] w-[126px] rounded-[2px] border-[4px] border-[#ff0000]" />
      <div className="absolute left-[1871px] top-[183px] flex h-[11px] w-[27px] items-center justify-center rounded-[4px] bg-[#f01515]">
        <span className="h-[2px] w-[15px] bg-[#ffd0d0]" />
      </div>
    </div>
  )
}
